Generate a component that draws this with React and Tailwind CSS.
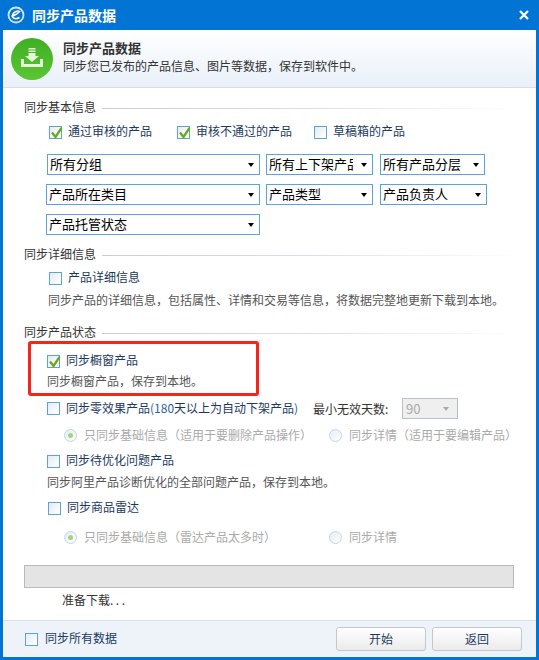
const FONT = '"Noto Sans CJK SC", sans-serif';

function Check({ checked, className = '' }) {
  return (
    <span className={`relative block w-[13px] h-[13px] shrink-0 border border-[#5aa5d5] bg-gradient-to-br from-[#e6ecf2] to-white ${className}`}>
      {checked && (
        <svg className="absolute left-[0px] top-[-1px]" width="13" height="13" viewBox="0 0 13 13">
          <path d="M2 6.500 L5.500 11 L11.500 2" fill="none" stroke="#6fa81a" strokeWidth="2.300" />
        </svg>
      )}
    </span>
  );
}

function CheckRow({ checked, label, className = '' }) {
  return (
    <label className={`flex items-center gap-[6px] h-[14px] text-[#1b3a5f] whitespace-nowrap ${className}`}>
      <Check checked={checked} />
      <span className="mb-[2px]">{label}</span>
    </label>
  );
}

function Radio({ on }) {
  return (
    <span className="flex items-center justify-center w-[13px] h-[13px] shrink-0 rounded-full border border-[#c3d5e8] bg-gradient-to-br from-[#e6ecf2] to-white">
      {on && <span className="block w-[5px] h-[5px] rounded-full bg-[#a9d27f]" />}
    </span>
  );
}

function RadioRow({ items, className = '' }) {
  return (
    <div className={`flex items-center h-[14px] text-[#aaaaaa] whitespace-nowrap ${className}`}>
      {items.map((it) => (
        <div key={it.label} className={`flex items-center gap-[7px] shrink-0 ${it.w}`}>
          <Radio on={it.on} />
          <span>{it.label}</span>
        </div>
      ))}
    </div>
  );
}

function Select({ label, className = '' }) {
  return (
    <div className={`flex items-center h-[21px] border border-[#5aa5d5] bg-white pl-[2px] pr-[5px] text-[13px] text-black shrink-0 ${className}`}>
      <span className="flex-1 min-w-0 h-[19px] leading-[19px] overflow-x-clip whitespace-nowrap -translate-y-px">{label}</span>
      <span className="w-0 h-0 ml-[8px] border-x-[3px] border-t-[4px] border-x-transparent border-t-black shrink-0" />
    </div>
  );
}

function Section({ title, className = '' }) {
  return (
    <div className={`flex items-center h-[14px] text-[#333333] ${className}`}>
      <span className="whitespace-nowrap">{title}</span>
      <span className="ml-[6px] mt-[2px] h-px w-[418px] bg-gradient-to-r from-[#ccccd8] via-[#dddde6] to-white" />
    </div>
  );
}

export default function App() {
  return (
    <div
      className="flex flex-col w-[539px] h-[660px] border-x-[3px] border-b-[3px] border-[#0275d4] bg-white text-[12px] leading-[14px]"
      style={{ fontFamily: FONT }}
    >
      {/* title bar */}
      <div className="flex items-center h-[30px] shrink-0 bg-[#0275d4] text-white pl-[3px] pr-[7px]">
        <svg width="20" height="20" viewBox="0 0 20 20" fill="none">
          <circle cx="10" cy="10" r="7.500" stroke="#cfe6f8" strokeWidth="1.800" />
          <path d="M5.500 11.500 C8 10.500 12 8.500 13.500 6.500 C11 5.500 7.500 7 6.500 10 C6 13 9 15 13.500 12.500" stroke="white" strokeWidth="1.600" />
        </svg>
        <span className="ml-[6px] text-[14px] font-bold">同步产品数据</span>
        <svg className="ml-auto" width="10" height="10" viewBox="0 0 10 10">
          <path d="M1 1 L9 9 M9 1 L1 9" stroke="white" strokeWidth="2.200" />
        </svg>
      </div>

      {/* header */}
      <div className="flex items-center h-[58px] shrink-0 border-b border-[#d5dde5] bg-gradient-to-b from-white to-[#e9f0f9] pl-[8px]">
        <svg className="shrink-0" width="42" height="42" viewBox="0 0 42 42">
          <defs>
            <linearGradient id="dl" x1="0" y1="0" x2="0" y2="1">
              <stop offset="0" stopColor="#3fae23" />
              <stop offset="1" stopColor="#5bc634" />
            </linearGradient>
          </defs>
          <circle cx="21" cy="21" r="21" fill="url(#dl)" />
          <path d="M17.500 10H24.500V11.500H17.500ZM17.500 12.500H24.500V14H17.500ZM17.500 15H24.500V18H28L21 24L14 18H17.500Z" fill="#e6f7d8" />
          <path d="M10 21H13V26H29V21H32V29H10Z" fill="#e6f7d8" />
        </svg>
        <div className="ml-[10px] mb-[3px] text-[#333333]">
          <div className="text-[13px] font-bold mb-[4px]">同步产品数据</div>
          <div>同步您已发布的产品信息、图片等数据，保存到软件中。</div>
        </div>
      </div>

      {/* main */}
      <div className="flex-1 flex flex-col pl-[21px]">
        <Section title="同步基本信息" className="mt-[12px]" />
        <div className="flex mt-[11px] ml-[25px]">
          <CheckRow checked label="通过审核的产品" className="w-[128px]" />
          <CheckRow checked label="审核不通过的产品" className="w-[137px]" />
          <CheckRow label="草稿箱的产品" />
        </div>

        <div className="flex mt-[15px] ml-[23px]">
          <Select label="所有分组" className="w-[213px]" />
          <Select label="所有上下架产品" className="w-[107px] ml-[6px]" />
          <Select label="所有产品分层" className="w-[105px] ml-[7px]" />
        </div>
        <div className="flex mt-[9px] ml-[22px]">
          <Select label="产品所在类目" className="w-[214px]" />
          <Select label="产品类型" className="w-[107px] ml-[6px]" />
          <Select label="产品负责人" className="w-[107px] ml-[7px]" />
        </div>
        <div className="flex mt-[9px] ml-[22px]">
          <Select label="产品托管状态" className="w-[214px]" />
        </div>

        <Section title="同步详细信息" className="mt-[12px]" />
        <CheckRow label="产品详细信息" className="mt-[10px] ml-[25px]" />
        <p className="mt-[8px] ml-[24px] text-[#555555] whitespace-nowrap">同步产品的详细信息，包括属性、详情和交易等信息，将数据完整地更新下载到本地。</p>

        <Section title="同步产品状态" className="mt-[18px]" />
        <div className="mt-[2px] ml-[4px] w-[231px] h-[55px] rounded-[3px] border-[3px] border-[#f5251b] pl-[16px]">
          <CheckRow checked label="同步橱窗产品" className="mt-[10px]" />
          <p className="mt-[6px] text-[#555555] whitespace-nowrap">同步橱窗产品，保存到本地。</p>
        </div>

        <div className="flex items-center h-[21px] mt-[2px] ml-[23px]">
          <CheckRow label={<>同步零效果产品<span className="text-[#2a5f98]">(180</span>天以上为自动下架产品<span className="text-[#2a5f98]">)</span></>} className="w-[266px]" />
          <span className="text-[#333333] whitespace-nowrap w-[89px]">最小无效天数:</span>
          <div className="flex items-center w-[56px] h-[21px] border border-[#b6c1cd] bg-[#efefef] pl-[3px] pr-[8px] text-[13px] text-[#aaaaaa]">
            <span className="flex-1">90</span>
            <span className="w-0 h-0 border-x-[3px] border-t-[4px] border-x-transparent border-t-[#aaaaaa]" />
          </div>
        </div>
        <RadioRow
          className="mt-[9px] ml-[40px]"
          items={[
            { label: '只同步基础信息（适用于要删除产品操作）', on: true, w: 'w-[265px]' },
            { label: '同步详情（适用于要编辑产品）', w: '' },
          ]}
        />
        <CheckRow label="同步待优化问题产品" className="mt-[12px] ml-[23px]" />
        <p className="mt-[7px] ml-[23px] text-[#555555] whitespace-nowrap">同步阿里产品诊断优化的全部问题产品，保存到本地。</p>
        <CheckRow label="同步商品雷达" className="mt-[12px] ml-[24px]" />
        <RadioRow
          className="mt-[15px] ml-[40px]"
          items={[
            { label: '只同步基础信息（雷达产品太多时）', on: true, w: 'w-[265px]' },
            { label: '同步详情', w: '' },
          ]}
        />

        <div className="mt-[21px] w-[490px] h-[23px] border border-[#bbbbbb] bg-[#e4e4e4]" />
        <div className="mt-[5px] ml-[38px] text-[#333333]">准备下载<span className="tracking-[2.500px]">...</span></div>
      </div>

      {/* footer */}
      <div className="flex items-center h-[37px] shrink-0 border-t border-[#dcdfe3] bg-[#eef3fa] pl-[22px] pr-[14px]">
        <CheckRow label={<span className="ml-px">同步所有数据</span>} />
        <button className="ml-auto w-[90px] h-[24px] rounded-[3px] border border-[#c4c8cc] bg-gradient-to-b from-white to-[#ebebeb] text-[#1b3a5f]">开始</button>
        <button className="ml-[6px] w-[90px] h-[24px] rounded-[3px] border border-[#c4c8cc] bg-gradient-to-b from-white to-[#ebebeb] text-[#1b3a5f]">返回</button>
      </div>
    </div>
  );
}
